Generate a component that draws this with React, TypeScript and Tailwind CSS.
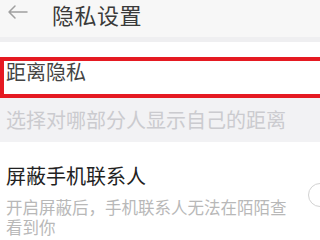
import React from "react";

export default function App() {
  const font = { fontFamily: '"Noto Sans CJK SC", "Noto Sans", sans-serif' };
  return (
    <div className="w-[320px] h-[240px] overflow-hidden bg-white" style={font}>
      <div className="h-[37px] bg-[#f7f7f7] flex items-start pt-[1px]">
        <svg width="22" height="16" viewBox="0 0 22 16" className="ml-[7px] mt-[3px]" fill="none" stroke="#a0a0a0" strokeWidth="1.5" strokeLinecap="round" strokeLinejoin="round">
          <path d="M20 8H2M8 2L2 8l6 6" />
        </svg>
        <div className="ml-[23px] text-[22px] leading-[26px] text-[#3a3a3a] tracking-[0.5px]">隐私设置</div>
      </div>
      <div className="h-[5px] bg-[#efeff1]" />
      <div className="bg-white pt-[15px]">
        <div className="w-[340px] h-[41px] border-4 border-[#e51a22] pl-[2px]">
          <div className="text-[20px] leading-[22px] text-[#444]">距离隐私</div>
        </div>
      </div>
      <div className="h-[44px] bg-[#f2f2f4] pl-[6px] flex items-center">
        <div className="text-[20px] leading-[22px] text-[#cbcbcf] whitespace-nowrap">选择对哪部分人显示自己的距离</div>
      </div>
      <div className="bg-white pt-[21px] pl-[6px] flex items-start">
        <div className="w-[290px] shrink-0">
          <div className="text-[20px] leading-[26px] text-[#222]">屏蔽手机联系人</div>
          <div className="mt-[8px] text-[16.5px] leading-[20px] text-[#b8b8b8]">开启屏蔽后，手机联系人无法在陌陌查看到你</div>
        </div>
        <div className="ml-[12px] mt-[20px] w-[48px] h-[24px] shrink-0 rounded-full border-[1.5px] border-[#d2d2d2]" />
      </div>
    </div>
  );
}
